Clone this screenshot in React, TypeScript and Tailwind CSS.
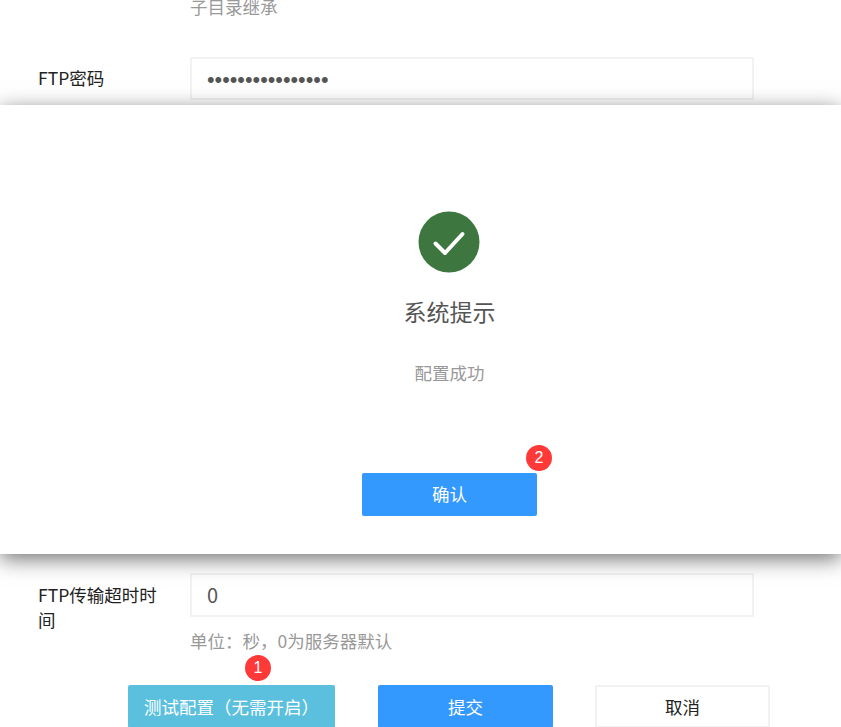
export default function App() {
  const font = "font-['Noto_Sans_CJK_SC','Noto_Sans',sans-serif]";
  return (
    <div className={`relative h-[727px] w-[841px] overflow-hidden bg-white ${font}`}>
      <div className="-mt-[5px] flex flex-col">
        <p className="ml-[190px] h-6 text-[17.5px] leading-6 text-[#999999]">子目录继承</p>
        <div className="mt-[38px] flex items-start">
          <label className="ml-[38px] w-[152px] pt-[8px] text-[17.5px] leading-[26px] text-[#222222]">FTP密码</label>
          <div className="flex h-[43px] w-[564px] items-center border-2 border-[#f2f2f2] px-[15px] pt-[3px] font-['Liberation_Sans'] text-[21.7px] text-[#555555]">••••••••••••••••</div>
        </div>
        <div className="mt-[473px] flex items-start">
          <label className="ml-[38px] w-[152px] pt-[9px] pr-[30px] text-[17.5px] leading-[25px] text-[#222222]">FTP传输超时时间</label>
          <div className="w-[564px]">
            <div className="flex h-[44px] items-center border-2 border-[#f2f2f2] px-[15px] text-[20px] text-[#555555]">0</div>
            <p className="mt-[12px] text-[17.5px] leading-6 text-[#999999]">单位：秒，0为服务器默认</p>
          </div>
        </div>
        <div className="mt-[32px] ml-[128px] flex items-start">
          <div className="relative">
            <button className="h-[43px] w-[207px] rounded-[2px] bg-[#5bc0de] pt-[2px] text-[17.5px] text-white">测试配置（无需开启）</button>
            <span className="absolute left-[117px] -top-[30px] flex h-[26px] w-[26px] items-center justify-center rounded-full bg-[#ff3838] font-['Liberation_Sans'] text-[16px] text-white">1</span>
          </div>
          <button className="ml-[43px] h-[43px] w-[175px] rounded-[2px] bg-[#3399ff] pt-[2px] text-[17.5px] text-white">提交</button>
          <button className="ml-[42px] h-[43px] w-[175px] rounded-[2px] border-2 border-[#f2f2f2] bg-white pt-[2px] text-[17.5px] text-[#222222]">取消</button>
        </div>
      </div>

      <div className="absolute left-0 top-[105px] flex h-[449px] w-full flex-col items-center bg-white pt-[106px] pl-[58px] shadow-[0_5px_20px_rgba(0,0,0,0.55)]">
        <svg width="62" height="62" viewBox="0 0 62 62" className="-ml-[2px]">
          <circle cx="31" cy="31" r="30.5" fill="#3d773f" />
          <path d="M17.5 32.5 L27 42 L44.5 23" fill="none" stroke="#ffffff" strokeWidth="4" strokeLinecap="round" strokeLinejoin="round" />
        </svg>
        <h2 className="mt-[21px] text-[23px] font-normal leading-[34px] text-[#555555]">系统提示</h2>
        <p className="mt-[33px] text-[17.5px] leading-6 text-[#999999]">配置成功</p>
        <div className="relative mt-[88px]">
          <button className="h-[43px] w-[175px] rounded-[2px] bg-[#3399ff] text-[17.5px] text-white">确认</button>
          <span className="absolute left-[164px] -top-[28px] flex h-[26px] w-[26px] items-center justify-center rounded-full bg-[#ff3838] font-['Liberation_Sans'] text-[16px] text-white">2</span>
        </div>
      </div>
    </div>
  );
}
